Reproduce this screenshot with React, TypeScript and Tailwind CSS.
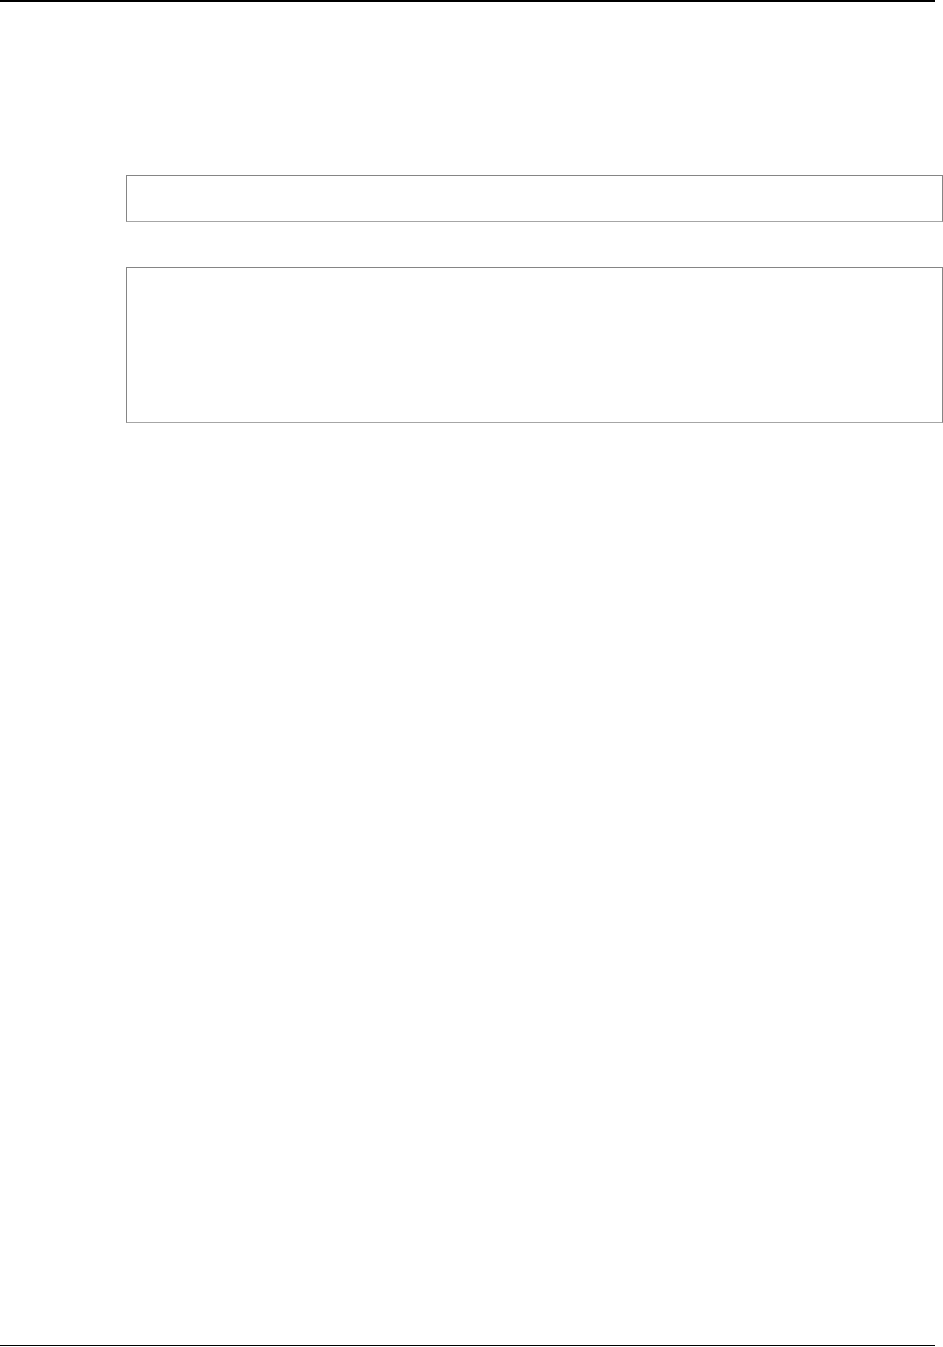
export default function App() {
  return (
    <div className="flex h-[1347px] w-[943px] flex-col bg-white">
      {/* header rule */}
      <div className="h-[2px] w-[935px] bg-black" />

      <div className="flex flex-col pl-[126px]">
        <div className="mt-[173px] h-[47px] w-[817px] border border-[#858585] border-b-[#a6a6a6] bg-white" />
        <div className="mt-[45px] h-[156px] w-[817px] border border-[#858585] border-b-[#a6a6a6] bg-white" />
      </div>

      {/* footer rule */}
      <div className="mb-[1px] mt-auto h-px w-[935px] bg-black" />
    </div>
  );
}
